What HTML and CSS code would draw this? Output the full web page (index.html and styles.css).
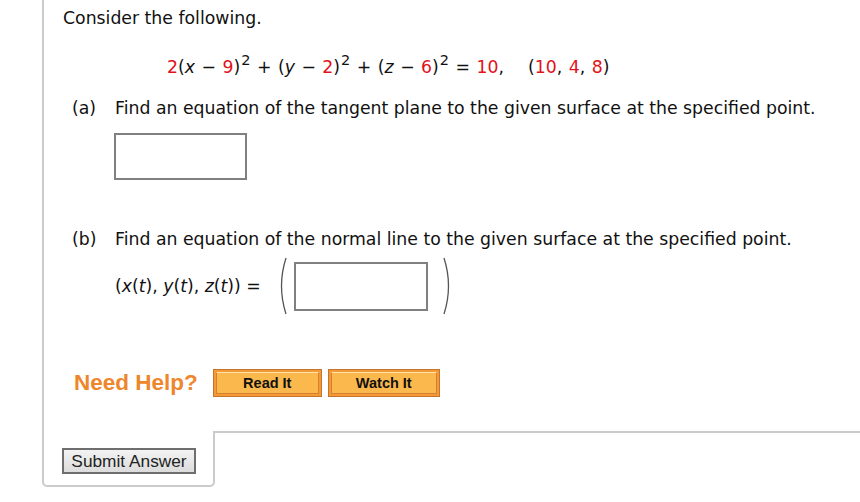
FILE: index.html
```html
<!DOCTYPE html>
<html>
<head>
<meta charset="utf-8">
<link rel="stylesheet" href="styles.css">
</head>
<body>
<div class="wrap">
  <div class="question">
    <p class="intro">Consider the following.</p>
    <p class="equation"><span class="red">2</span>(<i>x</i> &minus; <span class="red">9</span>)<sup>2</sup> + (<i>y</i> &minus; <span class="red">2</span>)<sup>2</sup> + (<i>z</i> &minus; <span class="red">6</span>)<sup>2</sup> = <span class="red">10</span>,<span class="gap"></span>(<span class="red">10</span>, <span class="red">4</span>, <span class="red">8</span>)</p>
    <div class="part">
      <span class="label">(a)</span>
      <span class="ptext">Find an equation of the tangent plane to the given surface at the specified point.</span>
    </div>
    <div class="answer-a"><span class="box box-a"></span></div>
    <div class="part part-b">
      <span class="label">(b)</span>
      <span class="ptext">Find an equation of the normal line to the given surface at the specified point.</span>
    </div>
    <div class="answer-b">
      <span class="lhs">(<i>x</i>(<i>t</i>), <i>y</i>(<i>t</i>), <i>z</i>(<i>t</i>)) =</span>
      <svg class="paren" width="12" height="58" viewBox="0 0 12 58"><path d="M9 1 Q 0 29 9 57" fill="none" stroke="#555" stroke-width="1.3"/></svg>
      <span class="box box-b"></span>
      <svg class="paren" width="12" height="58" viewBox="0 0 12 58"><path d="M3 1 Q 12 29 3 57" fill="none" stroke="#555" stroke-width="1.3"/></svg>
    </div>
    <div class="help">
      <span class="need">Need Help?</span>
      <span class="hbtn"><span class="hbtn-in">Read It</span></span>
      <span class="hbtn hbtn-w"><span class="hbtn-in">Watch It</span></span>
    </div>
  </div>
  <div class="footer">
    <div class="submit-cell"><button class="submit">Submit Answer</button></div>
    <div class="rest"></div>
  </div>
</div>
</body>
</html>
```
FILE: styles.css
```css
html, body {
  margin: 0;
  padding: 0;
  background: #fff;
}
.wrap {
  margin-left: 42px;
  width: 818px;
  font-family: "DejaVu Sans", Verdana, sans-serif;
  font-size: 17.3px;
  color: #111;
}
.question {
  border-left: 2px solid #cbcbcb;
  padding-left: 19px;
  padding-top: 7px;
  padding-bottom: 34px;
}
p { margin: 0; }
.intro {
  line-height: 22px;
}
.equation {
  margin-top: 27px;
  margin-left: 104px;
  line-height: 22px;
  word-spacing: 1px;
}
.equation sup {
  font-size: 14.5px;
  vertical-align: 8px;
  line-height: 0;
  margin-left: 1px;
}
.red { color: #e2121b; }
.gap { display: inline-block; width: 24px; }
.part {
  display: flex;
  margin-top: 19px;
  margin-left: 9px;
  line-height: 22px;
}
.label {
  width: 43px;
}
.answer-a {
  margin-left: 51px;
  margin-top: 14px;
  height: 47px;
}
.box {
  display: block;
  border: 2px solid #808080;
  box-sizing: border-box;
  background: #fff;
}
.box-a { width: 133px; height: 47px; }
.part-b { margin-top: 48px; }
.answer-b {
  display: flex;
  align-items: center;
  margin-left: 52px;
  margin-top: 7px;
}
.lhs { margin-right: 16px; }
.paren { display: block; }
.box-b { width: 134px; height: 49px; margin: 0 13px 0 5px; }
.help {
  display: flex;
  align-items: center;
  margin-top: 54px;
  margin-left: 11px;
  height: 28px;
}
.need {
  font-family: "Liberation Sans", Arial, sans-serif;
  font-weight: bold;
  font-size: 22.5px;
  color: #ee862c;
  margin-right: 15px;
}
.hbtn {
  display: block;
  box-sizing: border-box;
  width: 109px;
  height: 28px;
  border: 1px solid #c4742e;
  background: #f39a34;
  padding: 2px;
  margin-right: 6px;
}
.hbtn-w { width: 112px; }
.hbtn-in {
  display: block;
  box-sizing: border-box;
  height: 22px;
  border: 1px solid #d47f32;
  border-top-color: #fde2ad;
  background: #fbb84c;
  font-family: "Liberation Sans", Arial, sans-serif;
  font-weight: bold;
  font-size: 14.5px;
  color: #111;
  text-align: center;
  line-height: 21px;
}
.footer {
  display: flex;
}
.submit-cell {
  width: 151px;
  border-left: 2px solid #cbcbcb;
  border-right: 2px solid #cbcbcb;
  border-bottom: 2px solid #cbcbcb;
  border-bottom-left-radius: 5px;
  border-bottom-right-radius: 5px;
  padding-left: 18px;
  padding-top: 17px;
  height: 37px;
}
.rest {
  flex: 1;
  border-top: 2px solid #cbcbcb;
  border-top-left-radius: 3px;
  margin-left: -2px;
}
.submit {
  display: block;
  width: 134px;
  height: 26px;
  border: 2px solid #6e6e6e;
  background: linear-gradient(#f3f3f3, #dcdcdc);
  font-family: "Liberation Sans", Arial, sans-serif;
  font-size: 17.3px;
  color: #222;
  padding: 0;
  border-radius: 0;
}
```
